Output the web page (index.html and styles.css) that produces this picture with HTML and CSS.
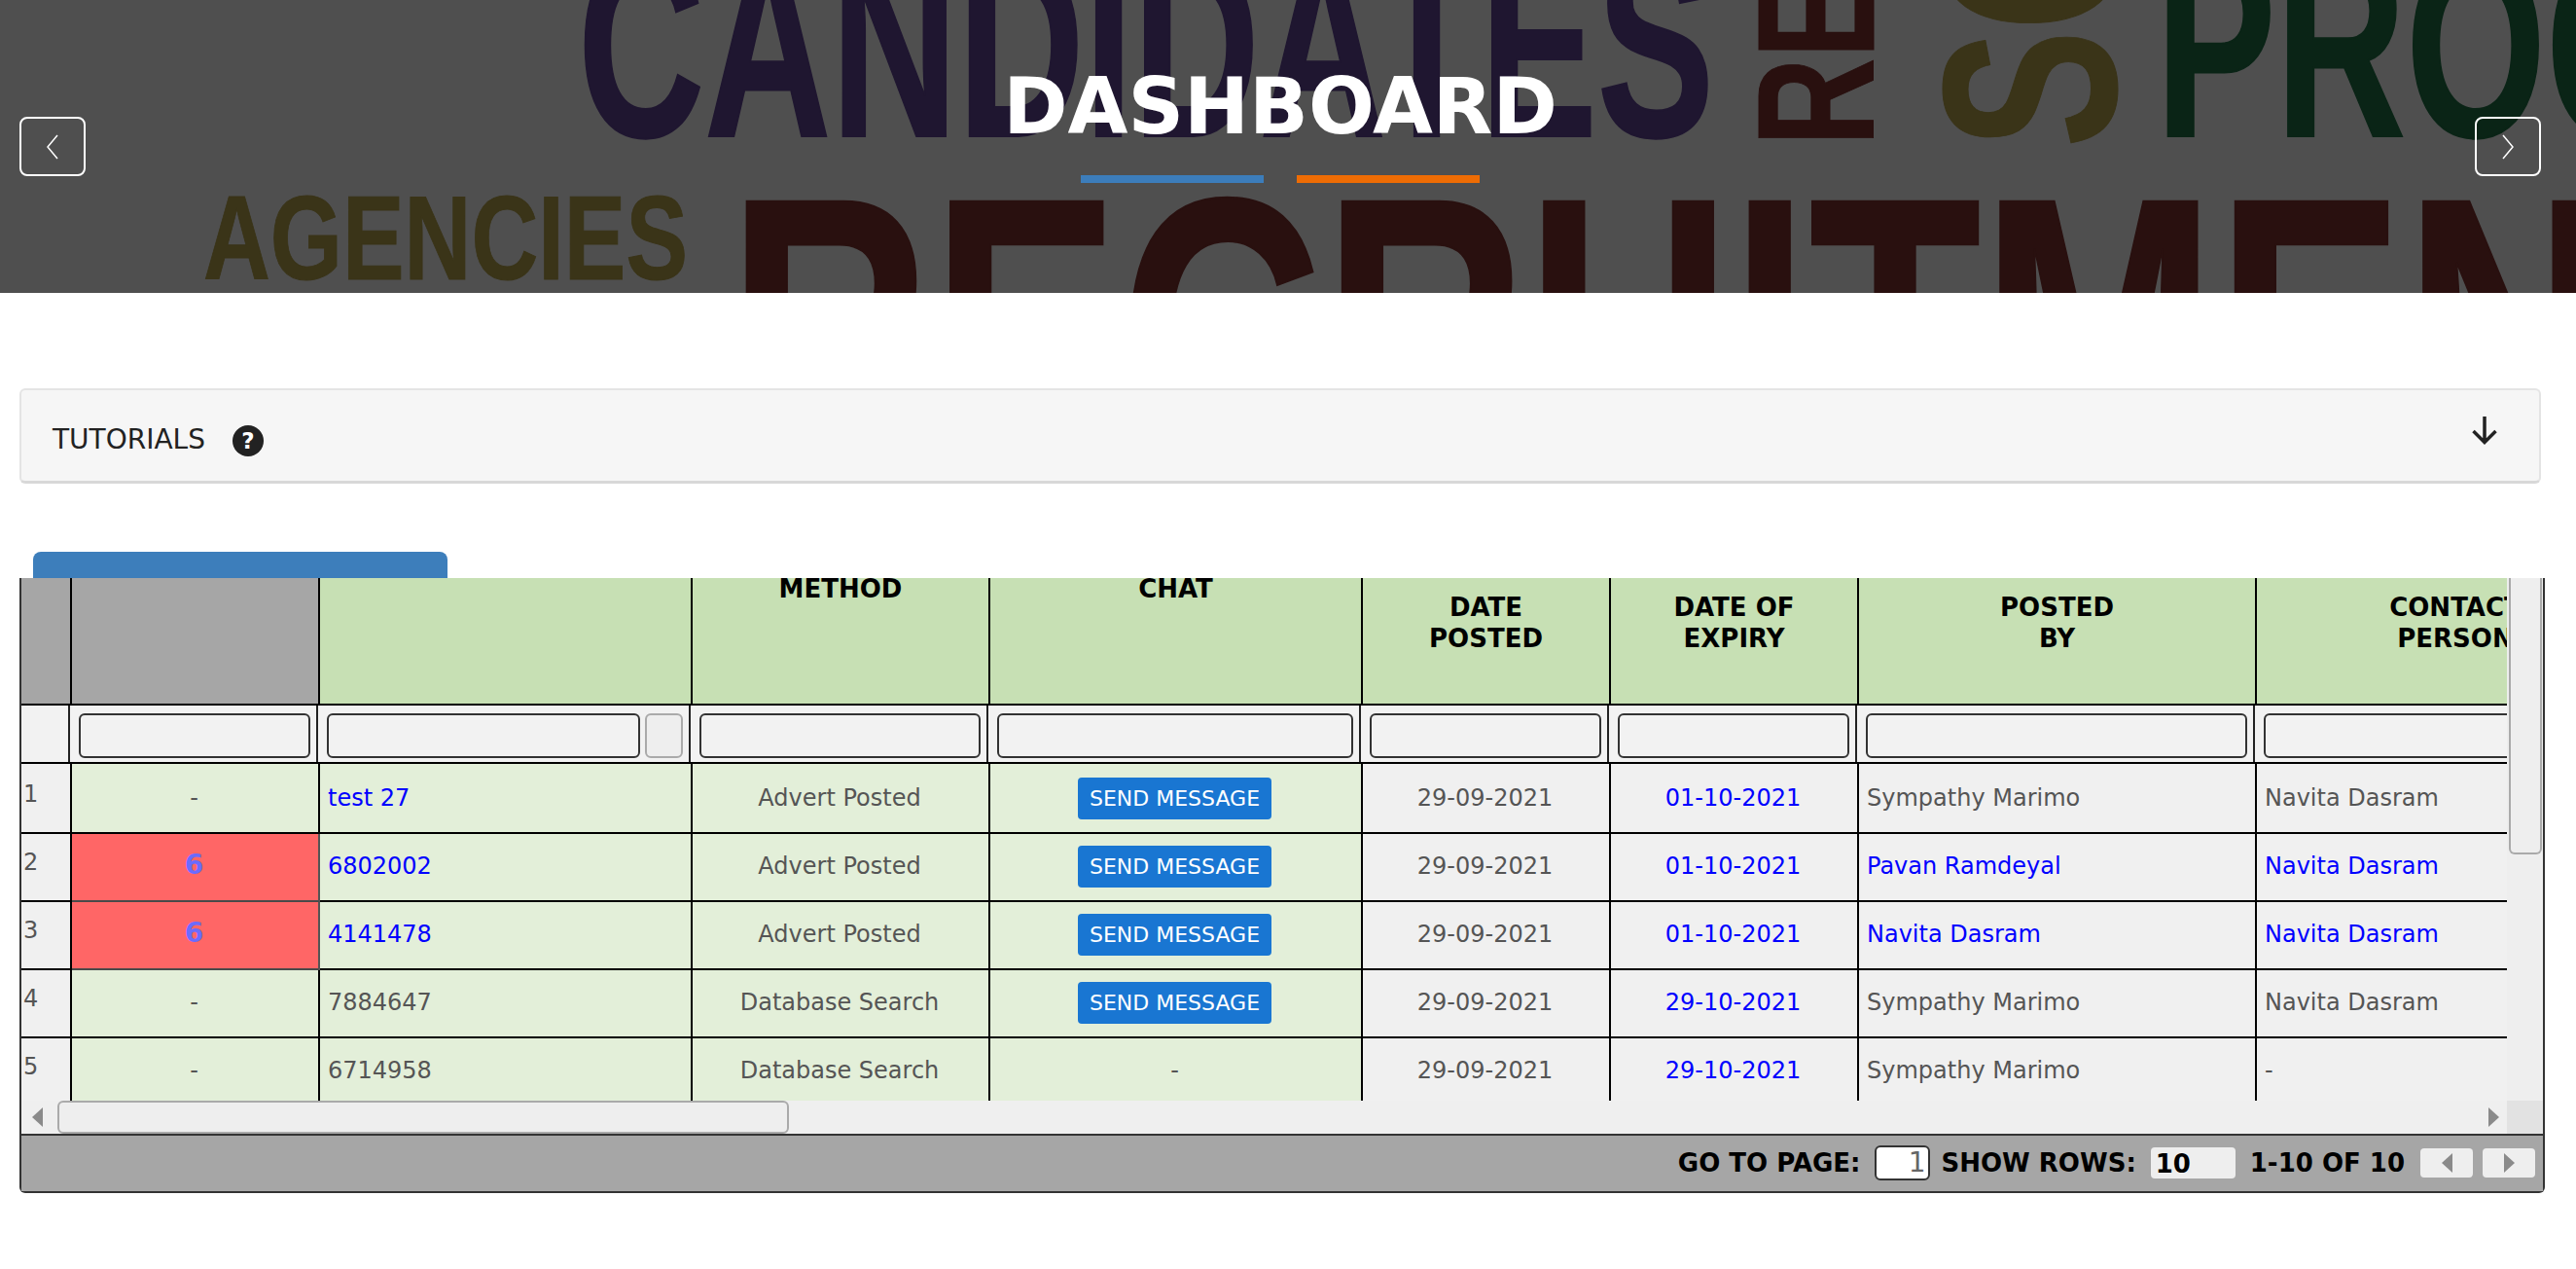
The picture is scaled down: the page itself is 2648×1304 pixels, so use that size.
FILE: index.html
```html
<!DOCTYPE html>
<html lang="en">
<head>
    <meta charset="UTF-8">
    <meta name="viewport" content="width=device-width, initial-scale=1.0">
    <title>Dashboard</title>
    <link rel="stylesheet" href="styles.css">
</head>
<body>
    <header class="hero">
        <svg class="hero-words" width="2648" height="301" viewBox="0 0 2648 301" aria-hidden="true">
            <text class="word purple" x="594" y="140" font-size="270" stroke-width="2" textLength="1168" lengthAdjust="spacingAndGlyphs">CANDIDATES</text>
            <text class="word red" transform="translate(1926 150) rotate(-90)" font-size="171" stroke-width="1" textLength="174" lengthAdjust="spacingAndGlyphs">RE</text>
            <text class="word olive" transform="translate(2175 152) rotate(-90)" font-size="254" stroke-width="1" textLength="262" lengthAdjust="spacingAndGlyphs">SO</text>
            <text class="word green" x="2216" y="140" font-size="270" stroke-width="2" textLength="905" lengthAdjust="spacingAndGlyphs">PROCESS</text>
            <text class="word olive" x="209" y="287" font-size="122" stroke-width="1" textLength="498" lengthAdjust="spacingAndGlyphs">AGENCIES</text>
            <text class="word red" x="748" y="482" font-size="400" stroke-width="2" textLength="2110" lengthAdjust="spacingAndGlyphs">RECRUITMENT</text>
        </svg>
        <button class="hero-nav">
            <svg width="16" height="26" viewBox="0 0 16 26"><path d="M13 1 L3 13 L13 25" /></svg>
        </button>
        <div class="hero-title">
            <h1>DASHBOARD</h1>
            <div class="hero-bars">
                <span class="bar-blue"></span>
                <span class="bar-orange"></span>
            </div>
        </div>
        <button class="hero-nav">
            <svg width="16" height="26" viewBox="0 0 16 26"><path d="M3 1 L13 13 L3 25" /></svg>
        </button>
    </header>

    <main class="content">
        <div class="panel">
            <span class="panel-title">TUTORIALS</span>
            <span class="help">?</span>
            <svg class="panel-arrow" width="28" height="30" viewBox="0 0 28 30"><path d="M14 1 V27 M2.5 16 L14 27.5 L25.5 16" /></svg>
        </div>

        <div class="tab"></div>

        <div class="grid-card">
            <div class="grid-view">
                <div class="grid-scroll">
                    <div class="row head">
                        <div class="th grey"></div>
                        <div class="th grey"></div>
                        <div class="th"></div>
                        <div class="th up">METHOD</div>
                        <div class="th up">CHAT</div>
                        <div class="th">DATE<br>POSTED</div>
                        <div class="th">DATE OF<br>EXPIRY</div>
                        <div class="th">POSTED<br>BY</div>
                        <div class="th">CONTACT<br>PERSON</div>
                    </div>
                    <div class="row filters">
                        <div class="fc"></div>
                        <div class="fc"><input type="text"></div>
                        <div class="fc"><input type="text"><button class="clear"></button></div>
                        <div class="fc"><input type="text"></div>
                        <div class="fc"><input type="text"></div>
                        <div class="fc"><input type="text"></div>
                        <div class="fc"><input type="text"></div>
                        <div class="fc"><input type="text"></div>
                        <div class="fc"><input type="text"></div>
                    </div>
                    <div class="row first">
                        <div class="td num">1</div>
                        <div class="td green center">-</div>
                        <div class="td green"><a href="#">test 27</a></div>
                        <div class="td green center">Advert Posted</div>
                        <div class="td green center"><button class="send">SEND MESSAGE</button></div>
                        <div class="td center">29-09-2021</div>
                        <div class="td center"><a href="#">01-10-2021</a></div>
                        <div class="td">Sympathy Marimo</div>
                        <div class="td">Navita Dasram</div>
                    </div>
                    <div class="row">
                        <div class="td num">2</div>
                        <div class="td alert center"><a href="#">6</a></div>
                        <div class="td green"><a href="#">6802002</a></div>
                        <div class="td green center">Advert Posted</div>
                        <div class="td green center"><button class="send">SEND MESSAGE</button></div>
                        <div class="td center">29-09-2021</div>
                        <div class="td center"><a href="#">01-10-2021</a></div>
                        <div class="td"><a href="#">Pavan Ramdeyal</a></div>
                        <div class="td"><a href="#">Navita Dasram</a></div>
                    </div>
                    <div class="row">
                        <div class="td num">3</div>
                        <div class="td alert center"><a href="#">6</a></div>
                        <div class="td green"><a href="#">4141478</a></div>
                        <div class="td green center">Advert Posted</div>
                        <div class="td green center"><button class="send">SEND MESSAGE</button></div>
                        <div class="td center">29-09-2021</div>
                        <div class="td center"><a href="#">01-10-2021</a></div>
                        <div class="td"><a href="#">Navita Dasram</a></div>
                        <div class="td"><a href="#">Navita Dasram</a></div>
                    </div>
                    <div class="row">
                        <div class="td num">4</div>
                        <div class="td green center">-</div>
                        <div class="td green">7884647</div>
                        <div class="td green center">Database Search</div>
                        <div class="td green center"><button class="send">SEND MESSAGE</button></div>
                        <div class="td center">29-09-2021</div>
                        <div class="td center"><a href="#">29-10-2021</a></div>
                        <div class="td">Sympathy Marimo</div>
                        <div class="td">Navita Dasram</div>
                    </div>
                    <div class="row">
                        <div class="td num">5</div>
                        <div class="td green center">-</div>
                        <div class="td green">6714958</div>
                        <div class="td green center">Database Search</div>
                        <div class="td green center">-</div>
                        <div class="td center">29-09-2021</div>
                        <div class="td center"><a href="#">29-10-2021</a></div>
                        <div class="td">Sympathy Marimo</div>
                        <div class="td">-</div>
                    </div>
                </div>
                <div class="vbar"><div class="vthumb"></div></div>
            </div>
            <div class="hbar">
                <span class="tri tri-left"></span>
                <div class="hthumb"></div>
                <span class="tri tri-right"></span>
                <span class="corner"></span>
            </div>
            <div class="pager">
                <span>GO TO PAGE:</span>
                <input class="page-input" type="text" value="1">
                <span>SHOW ROWS:</span>
                <span class="rows-select">10</span>
                <span class="range">1-10 OF 10</span>
                <button class="page-btn"><span class="tri tri-left"></span></button>
                <button class="page-btn"><span class="tri tri-right"></span></button>
            </div>
        </div>
    </main>
</body>
</html>
```

FILE: styles.css
```css
body {
    margin: 0;
    font-family: "DejaVu Sans", sans-serif;
    background: #fff;
    overflow: hidden;
}

/* banner */
.hero {
    position: relative;
    display: flex;
    align-items: center;
    justify-content: space-between;
    height: 301px;
    padding: 0 36px 0 20px;
    background: #4f4f4f;
    overflow: hidden;
}
.hero-words {
    position: absolute;
    top: 0;
    left: 0;
}
.word {
    font-family: "Liberation Sans", sans-serif;
    font-weight: bold;
}
.purple { fill: #1f1630; stroke: #1f1630; }
.red { fill: #29100f; stroke: #29100f; }
.olive { fill: #3a3418; stroke: #3a3418; }
.green { fill: #0a2416; stroke: #0a2416; }
.hero-nav {
    position: relative;
    display: flex;
    align-items: center;
    justify-content: center;
    width: 68px;
    height: 61px;
    padding: 0;
    background: transparent;
    border: 2px solid #fff;
    border-radius: 8px;
}
.hero-nav path {
    fill: none;
    stroke: #fff;
    stroke-width: 1.5;
}
.hero-title {
    position: relative;
    display: flex;
    flex-direction: column;
    align-items: center;
    margin-top: -4px;
    margin-bottom: 46px;
}
.hero-title h1 {
    margin: 0 0 24px;
    color: #fff;
    font-size: 80px;
    line-height: 92px;
    font-weight: bold;
}
.hero-bars {
    display: flex;
    gap: 34px;
}
.bar-blue, .bar-orange {
    width: 188px;
    height: 8px;
}
.bar-blue { background: #3c7dbb; }
.bar-orange { background: #ee6c04; }

/* tutorials */
.content {
    padding: 98px 36px 0 20px;
}
.panel {
    display: flex;
    align-items: center;
    box-sizing: border-box;
    height: 98px;
    padding: 0 32px;
    background: #f6f6f6;
    border: 2px solid #e4e4e4;
    border-bottom: 3px solid #d8d8d8;
    border-radius: 6px;
}
.panel-title {
    margin-top: 7px;
    font-size: 28px;
    color: #222;
}
.help {
    display: flex;
    align-items: center;
    justify-content: center;
    width: 32px;
    height: 32px;
    margin-left: 28px;
    margin-top: 10px;
    border-radius: 50%;
    background: #222;
    color: #fff;
    font-size: 23px;
    font-weight: bold;
}
.panel-arrow {
    margin-left: auto;
    margin-top: -12px;
    margin-right: 10px;
}
.panel-arrow path {
    fill: none;
    stroke: #222;
    stroke-width: 3.5;
}

.tab {
    width: 426px;
    height: 27px;
    margin: 70px 0 0 14px;
    background: #3d7ebb;
    border-radius: 8px 8px 0 0;
}

/* grid */
.grid-card {
    box-sizing: border-box;
    width: 2596px;
    border: 2px solid #333;
    border-top: none;
    border-radius: 0 0 6px 6px;
}
.grid-view {
    display: flex;
    height: 537px;
    overflow: hidden;
}
.grid-scroll {
    flex: none;
    width: 2555px;
    overflow: hidden;
}
.row {
    display: grid;
    grid-template-columns: 52px 255px 383px 306px 383px 255px 255px 409px 410px;
    width: 2708px;
    height: 70px;
}
.row.first {
    height: 72px;
}
.head {
    height: 131px;
    background: #c7e0b4;
}
.th {
    box-sizing: border-box;
    padding-top: 14px;
    border-right: 2px solid #000;
    border-bottom: 2px solid #000;
    background: #c7e0b4;
    color: #000;
    font-size: 26px;
    font-weight: bold;
    line-height: 32px;
    text-align: center;
}
.th.up {
    padding-top: 0;
    line-height: 22px;
}
.th.grey { background: #a6a6a6; }
.filters {
    grid-template-columns: 50px 255px 383px 306px 383px 255px 255px 409px 410px;
    box-sizing: border-box;
    height: 60px;
    border-bottom: 2px solid #000;
}
.fc {
    display: flex;
    gap: 5px;
    box-sizing: border-box;
    padding: 8px 6px 0 9px;
    background: #f2f2f2;
    border-right: 2px solid #222;
}
.fc input {
    flex: 1;
    min-width: 0;
    box-sizing: border-box;
    height: 46px;
    background: #f2f2f2;
    border: 2px solid #333;
    border-radius: 6px;
}
.clear {
    flex: none;
    width: 39px;
    height: 46px;
    padding: 0;
    background: #eee;
    border: 2px solid #aaa;
    border-radius: 6px;
}
.td {
    box-sizing: border-box;
    padding: 15px 8px 0;
    background: #f0f0f0;
    border-right: 2px solid #000;
    border-bottom: 2px solid #000;
    color: #555;
    font-size: 24px;
    line-height: 36px;
}
.first .td {
    padding-top: 17px;
}
.td a {
    color: #00f;
    text-decoration: none;
}
.td.num {
    padding: 11px 0 0 2px;
}
.first .td.num {
    padding-top: 13px;
}
.td.green { background: #e3efd9; }
.td.center {
    padding-right: 10px;
    text-align: center;
}
.td.alert {
    padding-top: 14px;
    background: #ff6666;
    border-right-color: #555;
    border-bottom-color: #4a4a4a;
    font-size: 28px;
    font-weight: bold;
}
.td.alert a { color: #6b6bff; }
.send {
    width: 199px;
    height: 43px;
    margin-top: -3px;
    padding: 0;
    background: #1976d2;
    color: #fff;
    border: none;
    border-radius: 4px;
    font-family: inherit;
    font-size: 22px;
}

/* scrollbars */
.vbar {
    flex: 1;
    padding: 0 1px 0 2px;
    background: #eee;
}
.vthumb {
    box-sizing: border-box;
    height: 284px;
    background: #eee;
    border: 2px solid #aaa;
    border-top: none;
    border-radius: 0 0 6px 6px;
}
.hbar {
    display: flex;
    align-items: center;
    height: 34px;
    background: #efefef;
}
.hbar > .tri-left { margin-left: 11px; }
.hbar > .tri-right { margin-left: auto; }
.hthumb {
    box-sizing: border-box;
    width: 752px;
    height: 34px;
    margin-left: 15px;
    background: #eee;
    border: 2px solid #aaa;
    border-radius: 6px;
}
.corner {
    width: 37px;
    height: 34px;
    margin-left: 8px;
    background: #e2e2e2;
}
.tri {
    display: inline-block;
    width: 0;
    height: 0;
    border-top: 10px solid transparent;
    border-bottom: 10px solid transparent;
}
.tri-left { border-right: 11px solid #8a8a8a; }
.tri-right { border-left: 11px solid #8a8a8a; }

/* pager */
.pager {
    display: flex;
    align-items: center;
    justify-content: flex-end;
    box-sizing: border-box;
    height: 59px;
    padding: 0 8px 2px 0;
    background: #a6a6a6;
    border-top: 2px solid #333;
    color: #000;
    font-size: 26px;
    font-weight: bold;
}
.page-input {
    box-sizing: border-box;
    width: 57px;
    height: 36px;
    margin: 0 12px 0 14px;
    padding: 0 2px 0 0;
    background: #fff;
    border: 2px solid #333;
    border-radius: 6px;
    color: #666;
    font-family: inherit;
    font-size: 28px;
    text-align: right;
}
.rows-select {
    box-sizing: border-box;
    width: 87px;
    height: 32px;
    margin: 0 15px 0 15px;
    padding-left: 5px;
    background: #eee;
    border-radius: 4px;
    line-height: 34px;
}
.page-btn {
    display: flex;
    align-items: center;
    justify-content: center;
    width: 54px;
    height: 30px;
    margin-left: 10px;
    padding: 0;
    background: #eee;
    border: none;
    border-radius: 4px;
}
.range { margin-right: 6px; }
```
